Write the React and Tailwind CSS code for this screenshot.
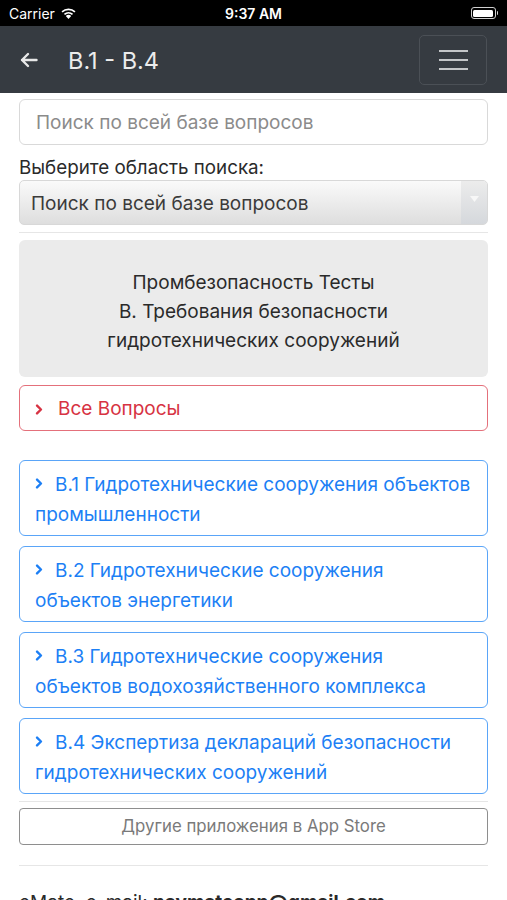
import React from "react";

const Chevron = ({ className }) => (
  <svg viewBox="0 0 10 14" className={className} width="8" height="11" fill="none" stroke="currentColor" strokeWidth="3" strokeLinecap="round" strokeLinejoin="round">
    <path d="M2.5 2 L7.5 7 L2.5 12" />
  </svg>
);

const Item = ({ lines }) => (
  <div className="border border-[#5aa5f8] rounded-[6px] px-[15px] pt-[9px] pb-[5px] text-[#1c7ff5] text-[19px] leading-[30px]">
    <span className="inline-flex items-center mr-[12px] align-middle relative -top-[2px]"><Chevron /></span>
    {lines[0]}
    <br />
    {lines[1]}
  </div>
);

export default function App() {
  return (
    <div className="w-[507px] h-[900px] overflow-hidden bg-white" style={{ fontFamily: 'Inter, "Open Sans", "Liberation Sans", Arial, sans-serif' }}>
      {/* status bar */}
      <div className="h-[26px] bg-black text-white flex items-center justify-between px-[9px] relative">
        <div className="flex items-center gap-[5px] text-[14px]">
          <span>Carrier</span>
          <svg width="17" height="12" viewBox="0 0 17 12" fill="white">
            <path d="M8.5 12 L5.8 8.9 A4 4 0 0 1 11.2 8.9 Z" />
            <path d="M3.9 6.8 A6.8 6.8 0 0 1 13.1 6.8 L12 8 A5.2 5.2 0 0 0 5 8 Z" />
            <path d="M1.5 4.2 A10.2 10.2 0 0 1 15.5 4.2 L14.4 5.5 A8.6 8.6 0 0 0 2.6 5.5 Z" />
          </svg>
        </div>
        <div className="absolute left-1/2 -translate-x-1/2 text-[14px] font-semibold">9:37 AM</div>
        <div className="flex items-center">
          <div className="w-[25px] h-[12px] border border-[#d0d0d0] rounded-[3px] p-[1.5px]">
            <div className="w-full h-full bg-white rounded-[1.5px]" />
          </div>
          <div className="w-[1.5px] h-[4px] bg-[#d0d0d0] rounded-r ml-[1px]" />
        </div>
      </div>
      {/* navbar */}
      <div className="h-[67px] bg-[#363b41] flex items-center pl-[20px] pr-[20px]">
        <svg width="18" height="16" viewBox="0 0 18 16" fill="none" stroke="#e8e8e8" strokeWidth="2.4" strokeLinecap="round" strokeLinejoin="round">
          <path d="M16.5 8 H2 M8 2 L2 8 L8 14" />
        </svg>
        <div className="ml-[30px] text-[#ececec] text-[23.5px] pt-[2px]">B.1 - B.4</div>
        <div className="ml-auto w-[68px] h-[50px] border border-[#4b5056] rounded-[5px] flex flex-col items-center justify-center gap-[7px]">
          <div className="w-[29px] h-[2px] bg-[#c4c6c8]" />
          <div className="w-[29px] h-[2px] bg-[#c4c6c8]" />
          <div className="w-[29px] h-[2px] bg-[#c4c6c8]" />
        </div>
      </div>
      {/* content */}
      <div className="px-[19px]">
        <div className="mt-[6px] h-[46px] border border-[#d9d9d9] rounded-[6px] flex items-center pl-[16px] pt-[2px] text-[19px] text-[#8b8b8b]">
          Поиск по всей базе вопросов
        </div>
        <div className="mt-[12px] text-[18.8px] leading-[22px] text-[#2a2a2a]">Выберите область поиска:</div>
        <div className="mt-[1px] h-[45px] rounded-[5px] border border-[#d8d8d8] flex overflow-hidden bg-gradient-to-b from-[#fafafa] to-[#dedede]">
          <div className="flex-1 flex items-center pl-[11px] pt-[4px] text-[19px] text-[#3a3a3a]">Поиск по всей базе вопросов</div>
          <div className="w-[26px] bg-gradient-to-b from-[#ececec] to-[#d5d8dc] flex items-start justify-center pt-[15px]">
            <svg width="9" height="6" viewBox="0 0 9 6"><path d="M0 0 H9 L4.5 6 Z" fill="#f7f7f7" /></svg>
          </div>
        </div>
        <div className="mt-[7px] h-px bg-[#e6e6e6]" />
        <div className="mt-[7px] bg-[#ebebeb] rounded-[6px] pt-[28px] pb-[22px] text-center text-[19px] leading-[29px] text-[#2a2a2a]">
          Промбезопасность Тесты
          <br />
          В. Требования безопасности
          <br />
          гидротехнических сооружений
        </div>
        <div className="mt-[8px] h-[46px] border border-[#e4707b] rounded-[6px] flex items-center pl-[15px] pt-[2px] text-[#d73343] text-[19px]">
          <Chevron className="mr-[15px]" />
          Все Вопросы
        </div>
        <div className="mt-[29px] flex flex-col gap-[10px]">
          <Item lines={["В.1 Гидротехнические сооружения объектов", "промышленности"]} />
          <Item lines={["В.2 Гидротехнические сооружения", "объектов энергетики"]} />
          <Item lines={["В.3 Гидротехнические сооружения", "объектов водохозяйственного комплекса"]} />
          <Item lines={["В.4 Экспертиза деклараций безопасности", "гидротехнических сооружений"]} />
        </div>
        <div className="mt-[7px] h-px bg-[#e6e6e6]" />
        <div className="mt-[6px] h-[37px] border border-[#8e8e8e] rounded-[4px] flex items-center justify-center pt-[1px] text-[16.8px] text-[#7a7a7a]">
          Другие приложения в App Store
        </div>
        <div className="mt-[20px] h-px bg-[#e6e6e6]" />
        <div className="mt-[23px] text-[19px] text-[#2a2a2a] whitespace-nowrap">
          eMate, e-mail: <span className="font-bold">naymateapp@gmail.com</span>
        </div>
      </div>
    </div>
  );
}
